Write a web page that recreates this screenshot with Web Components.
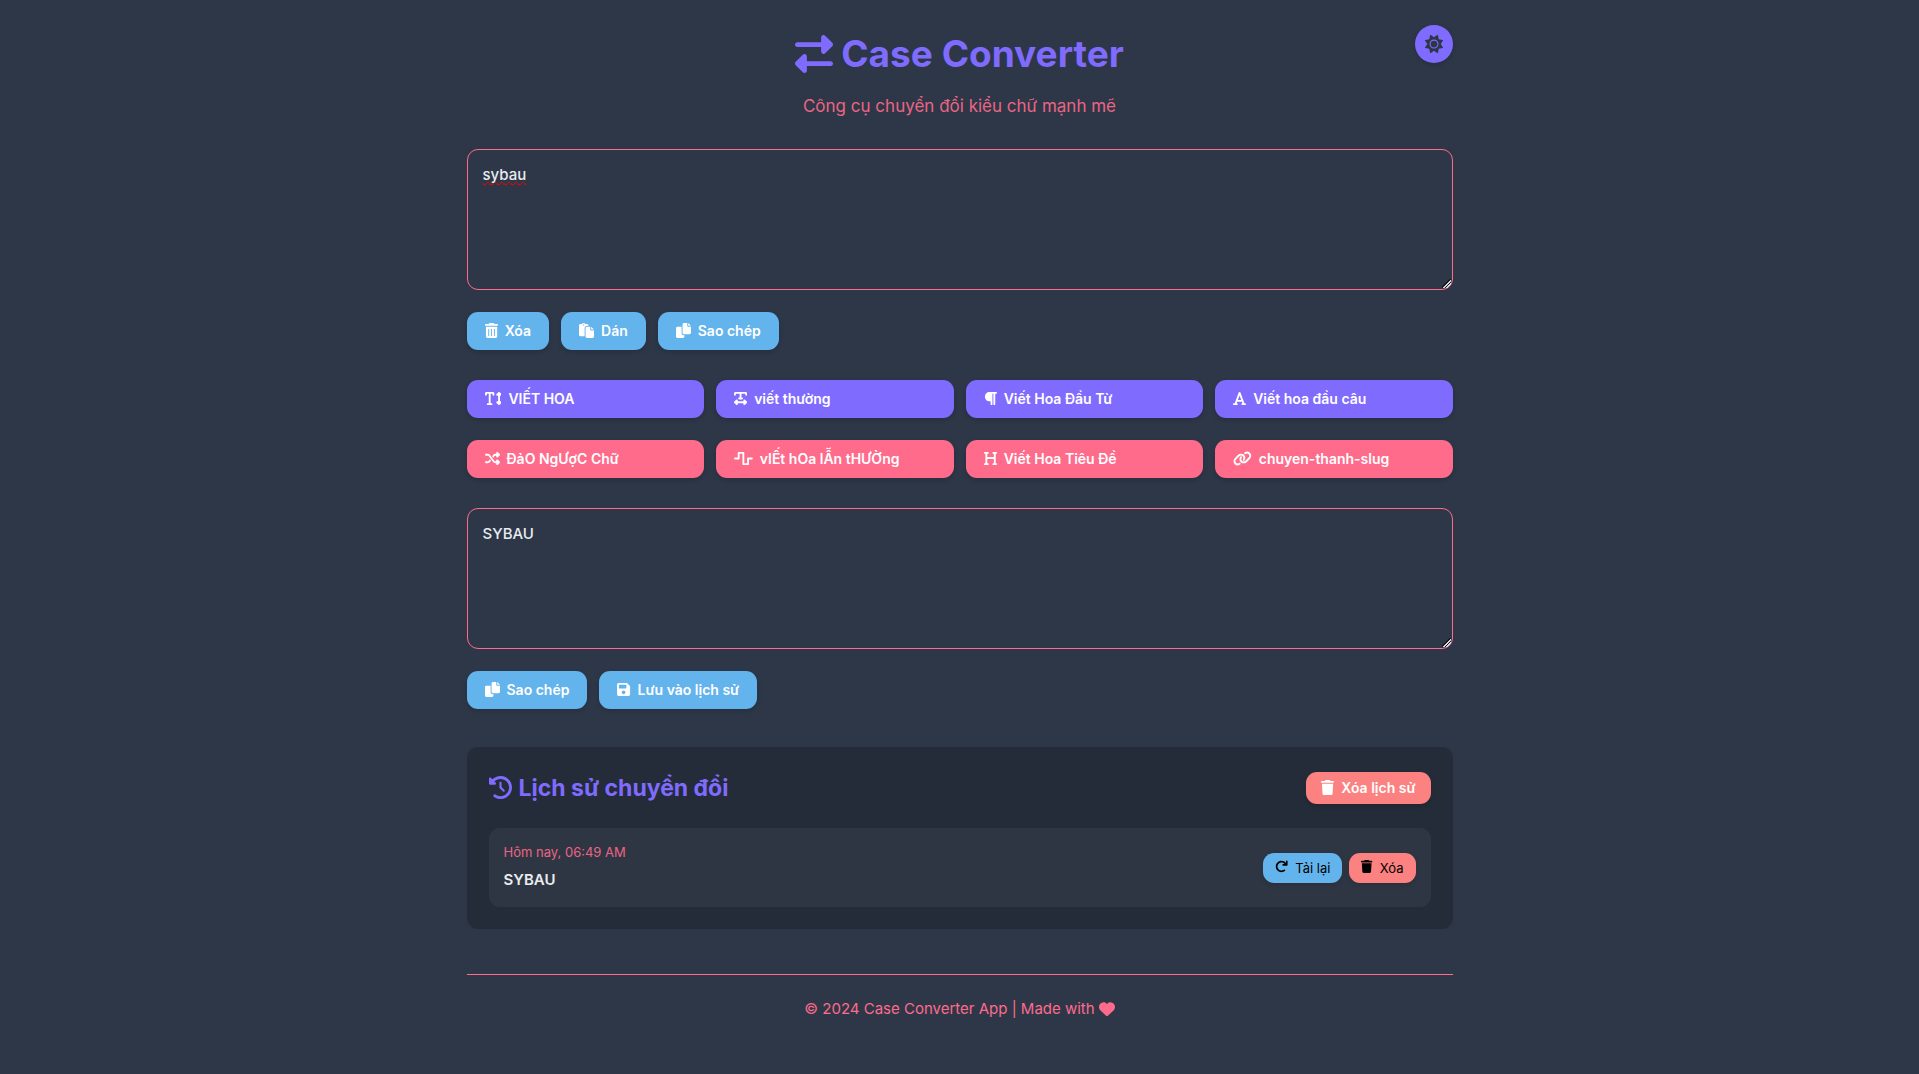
<!DOCTYPE html>
<html lang="vi">
<head>
<meta charset="utf-8">
<meta name="viewport" content="width=device-width, initial-scale=1">
<title>Case Converter</title>
<style>
  :root {
    --bg: #2d3748;
    --primary: #806bff;
    --secondary: #ff6b8b;
    --accent: #63b3ed;
    --danger: #fc8181;
    --text: #e9ecf1;
  }
  * { box-sizing: border-box; }
  body {
    margin: 0;
    min-height: 100vh;
    background: var(--bg);
    color: var(--text);
    font: 15px/24px Inter, "Noto Sans", sans-serif;
  }
</style>
</head>
<body>
<case-app></case-app>

<script>
const ICONS = {
  swap: [512, 'M32 96l320 0V32c0-12.9 7.8-24.6 19.8-29.6s25.7-2.2 34.9 6.9l96 96c6 6 9.4 14.1 9.4 22.6s-3.4 16.6-9.4 22.6l-96 96c-9.2 9.2-22.9 11.9-34.9 6.9s-19.8-16.6-19.8-29.6V160L32 160c-17.7 0-32-14.3-32-32s14.3-32 32-32zM480 352c17.7 0 32 14.3 32 32s-14.3 32-32 32H160v64c0 12.9-7.8 24.6-19.8 29.6s-25.7 2.2-34.9-6.9l-96-96c-6-6-9.4-14.1-9.4-22.6s3.4-16.6 9.4-22.6l96-96c9.2-9.2 22.9-11.9 34.9-6.9s19.8 16.6 19.8 29.6l0 64H480z'],
  sun: [512, 'M361.5 1.2c5 2.1 8.6 6.6 9.6 11.9L391 121l107.9 19.8c5.3 1 9.8 4.6 11.9 9.6s1.5 10.7-1.6 15.2L446.9 256l62.3 90.3c3.1 4.5 3.7 10.2 1.6 15.2s-6.6 8.6-11.9 9.6L391 391 371.1 498.9c-1 5.3-4.6 9.8-9.6 11.9s-10.7 1.5-15.2-1.6L256 446.9l-90.3 62.3c-4.5 3.1-10.2 3.7-15.2 1.6s-8.6-6.6-9.6-11.9L121 391 13.1 371.1c-5.3-1-9.8-4.6-11.9-9.6s-1.5-10.7 1.6-15.2L65.1 256 2.8 165.7c-3.1-4.5-3.7-10.2-1.6-15.2s6.6-8.6 11.9-9.6L121 121 140.9 13.1c1-5.3 4.6-9.8 9.6-11.9s10.7-1.5 15.2 1.6L256 65.1 346.3 2.8c4.5-3.1 10.2-3.7 15.2-1.6zM160 256a96 96 0 1 1 192 0 96 96 0 1 1 -192 0zm224 0a128 128 0 1 0 -256 0 128 128 0 1 0 256 0z'],
  bin: [448, 'M135.2 17.7C140.6 6.8 151.7 0 163.8 0H284.2c12.1 0 23.2 6.8 28.6 17.7L320 32h96c17.7 0 32 14.3 32 32s-14.3 32-32 32H32C14.3 96 0 81.7 0 64S14.3 32 32 32h96l7.2-14.3zM32 128H416V448c0 35.3-28.7 64-64 64H96c-35.3 0-64-28.7-64-64V128zm96 64c-8.8 0-16 7.2-16 16V432c0 8.8 7.2 16 16 16s16-7.2 16-16V208c0-8.8-7.2-16-16-16zm96 0c-8.8 0-16 7.2-16 16V432c0 8.8 7.2 16 16 16s16-7.2 16-16V208c0-8.8-7.2-16-16-16zm96 0c-8.8 0-16 7.2-16 16V432c0 8.8 7.2 16 16 16s16-7.2 16-16V208c0-8.8-7.2-16-16-16z'],
  trash: [448, 'M135.2 17.7L128 32H32C14.3 32 0 46.3 0 64S14.3 96 32 96H416c17.7 0 32-14.3 32-32s-14.3-32-32-32H320l-7.2-14.3C307.4 6.8 296.3 0 284.2 0H163.8c-12.1 0-23.2 6.8-28.6 17.7zM416 128H32L53.2 467c1.6 25.3 22.6 45 47.9 45H346.9c25.3 0 46.3-19.7 47.9-45L416 128z'],
  paste: [512, 'M320 96V80C320 53.49 298.5 32 272 32H215.4C204.3 12.89 183.6 0 160 0S115.7 12.89 104.6 32H48C21.49 32 0 53.49 0 80v320C0 426.5 21.49 448 48 448l144 .0013L192 176C192 131.8 227.8 96 272 96H320zM160 88C146.8 88 136 77.25 136 64S146.8 40 160 40S184 50.75 184 64S173.3 88 160 88zM416 128v96h96L416 128zM384 224L384 128h-112C245.5 128 224 149.5 224 176v288c0 26.51 21.49 48 48 48h192c26.51 0 48-21.49 48-48V256h-95.99C398.4 256 384 241.6 384 224z'],
  copy: [512, 'M384 96L384 0h-112c-26.51 0-48 21.49-48 48v288c0 26.51 21.49 48 48 48H464c26.51 0 48-21.49 48-48V128h-95.1C398.4 128 384 113.6 384 96zM416 0v96h96L416 0zM192 352V128h-144c-26.51 0-48 21.49-48 48v288c0 26.51 21.49 48 48 48h192c26.51 0 48-21.49 48-48L288 416h-32C220.7 416 192 387.3 192 352z'],
  textHeight: [576, 'M64 128V96h64l0 320H96c-17.7 0-32 14.3-32 32s14.3 32 32 32H224c17.7 0 32-14.3 32-32s-14.3-32-32-32H192l0-320h64v32c0 17.7 14.3 32 32 32s32-14.3 32-32V80c0-26.5-21.5-48-48-48H160 48C21.5 32 0 53.5 0 80v48c0 17.7 14.3 32 32 32s32-14.3 32-32zM502.6 41.4c-12.5-12.5-32.8-12.5-45.3 0l-64 64c-9.2 9.2-11.9 22.9-6.9 34.9s16.6 19.8 29.6 19.8h32V352H416c-12.9 0-24.6 7.8-29.6 19.8s-2.2 25.7 6.9 34.9l64 64c12.5 12.5 32.8 12.5 45.3 0l64-64c9.2-9.2 11.9-22.9 6.9-34.9s-16.6-19.8-29.6-19.8H512V160h32c12.9 0 24.6-7.8 29.6-19.8s2.2-25.7-6.9-34.9l-64-64z'],
  textWidth: [448, 'M64 128V96H192l0 128H176c-17.7 0-32 14.3-32 32s14.3 32 32 32h96c17.7 0 32-14.3 32-32s-14.3-32-32-32H256l0-128H384v32c0 17.7 14.3 32 32 32s32-14.3 32-32V80c0-26.5-21.5-48-48-48H224 48C21.5 32 0 53.5 0 80v48c0 17.7 14.3 32 32 32s32-14.3 32-32zM9.4 361.4c-12.5 12.5-12.5 32.8 0 45.3l64 64c9.2 9.2 22.9 11.9 34.9 6.9s19.8-16.6 19.8-29.6V416H320v32c0 12.9 7.8 24.6 19.8 29.6s25.7 2.2 34.9-6.9l64-64c12.5-12.5 12.5-32.8 0-45.3l-64-64c-9.2-9.2-22.9-11.9-34.9-6.9s-19.8 16.6-19.8 29.6v32H128V320c0-12.9-7.8-24.6-19.8-29.6s-25.7-2.2-34.9 6.9l-64 64z'],
  paragraph: [448, 'M192 32h64H416c17.7 0 32 14.3 32 32s-14.3 32-32 32H384l0 352c0 17.7-14.3 32-32 32s-32-14.3-32-32l0-352H288V448c0 17.7-14.3 32-32 32s-32-14.3-32-32V352H192c-88.4 0-160-71.6-160-160s71.6-160 160-160z'],
  font: [448, 'M254 52.8C249.3 40.3 237.3 32 224 32s-25.3 8.3-30 20.8L57.8 416H32c-17.7 0-32 14.3-32 32s14.3 32 32 32h96c17.7 0 32-14.3 32-32s-14.3-32-32-32h-1.8l18-48H303.8l18 48H320c-17.7 0-32 14.3-32 32s14.3 32 32 32h96c17.7 0 32-14.3 32-32s-14.3-32-32-32H390.2L254 52.8zM279.8 304H168.2L224 155.1 279.8 304z'],
  shuffle: [512, 'M403.8 34.4c12-5 25.7-2.2 34.9 6.9l64 64c6 6 9.4 14.1 9.4 22.6s-3.4 16.6-9.4 22.6l-64 64c-9.2 9.2-22.9 11.9-34.9 6.9s-19.8-16.6-19.8-29.6V160H352c-10.1 0-19.6 4.7-25.6 12.8L284 229.3 244 176l31.2-41.6C293.3 110.2 321.8 96 352 96h32V64c0-12.9 7.8-24.6 19.8-29.6zM164 282.7L204 336l-31.2 41.6C154.7 401.8 126.2 416 96 416H32c-17.7 0-32-14.3-32-32s14.3-32 32-32H96c10.1 0 19.6-4.7 25.6-12.8L164 282.7zm274.6 188c-9.2 9.2-22.9 11.9-34.9 6.9s-19.8-16.6-19.8-29.6V416H352c-30.2 0-58.7-14.2-76.8-38.4L121.6 172.8c-6-8.1-15.5-12.8-25.6-12.8H32c-17.7 0-32-14.3-32-32s14.3-32 32-32H96c30.2 0 58.7 14.2 76.8 38.4L326.4 339.2c6 8.1 15.5 12.8 25.6 12.8h32V320c0-12.9 7.8-24.6 19.8-29.6s25.7-2.2 34.9 6.9l64 64c6 6 9.4 14.1 9.4 22.6s-3.4 16.6-9.4 22.6l-64 64z'],
  wave: [640, 'M128 64c0-17.7 14.3-32 32-32H320c17.7 0 32 14.3 32 32V416h96V256c0-17.7 14.3-32 32-32H608c17.7 0 32 14.3 32 32s-14.3 32-32 32H512V448c0 17.7-14.3 32-32 32H320c-17.7 0-32-14.3-32-32V96H192V256c0 17.7-14.3 32-32 32H32c-17.7 0-32-14.3-32-32s14.3-32 32-32h96V64z'],
  heading: [448, 'M0 64C0 46.3 14.3 32 32 32H80h48c17.7 0 32 14.3 32 32s-14.3 32-32 32H112V208H336V96H320c-17.7 0-32-14.3-32-32s14.3-32 32-32h48 48c17.7 0 32 14.3 32 32s-14.3 32-32 32H400V240 416h16c17.7 0 32 14.3 32 32s-14.3 32-32 32H368 320c-17.7 0-32-14.3-32-32s14.3-32 32-32h16V272H112V416h16c17.7 0 32 14.3 32 32s-14.3 32-32 32H80 32c-17.7 0-32-14.3-32-32s14.3-32 32-32H48V240 96H32C14.3 96 0 81.7 0 64z'],
  link: [640, 'M579.8 267.7c56.5-56.5 56.5-148 0-204.5c-50-50-128.8-56.5-186.3-15.4l-1.6 1.1c-14.4 10.3-17.7 30.3-7.4 44.6s30.3 17.7 44.6 7.4l1.6-1.1c32.1-22.9 76-19.3 103.8 8.6c31.5 31.5 31.5 82.5 0 114L422.3 334.8c-31.5 31.5-82.5 31.5-114 0c-27.9-27.9-31.5-71.8-8.6-103.8l1.1-1.6c10.3-14.4 6.9-34.4-7.4-44.6s-34.4-6.9-44.6 7.4l-1.1 1.6C206.5 251.2 213 330 263 380c56.5 56.5 148 56.5 204.5 0L579.8 267.7zM60.2 244.3c-56.5 56.5-56.5 148 0 204.5c50 50 128.8 56.5 186.3 15.4l1.6-1.1c14.4-10.3 17.7-30.3 7.4-44.6s-30.3-17.7-44.6-7.4l-1.6 1.1c-32.1 22.9-76 19.3-103.8-8.6C74 372 74 321 105.5 289.5L217.7 177.2c31.5-31.5 82.5-31.5 114 0c27.9 27.9 31.5 71.8 8.6 103.9l-1.1 1.6c-10.3 14.4-6.9 34.4 7.4 44.6s34.4 6.9 44.6-7.4l1.1-1.6C433.5 260.8 427 182 377 132c-56.5-56.5-148-56.5-204.5 0L60.2 244.3z'],
  save: [448, 'M433.1 129.1l-83.9-83.9C342.3 38.32 327.1 32 316.1 32H64C28.65 32 0 60.65 0 96v320c0 35.35 28.65 64 64 64h320c35.35 0 64-28.65 64-64V163.9C448 152.9 441.7 137.7 433.1 129.1zM224 416c-35.34 0-64-28.66-64-64s28.66-64 64-64s64 28.66 64 64S259.3 416 224 416zM320 208C320 216.8 312.8 224 304 224h-224C71.16 224 64 216.8 64 208v-96C64 103.2 71.16 96 80 96h224C312.8 96 320 103.2 320 112V208z'],
  history: [512, 'M75 75L41 41C25.9 25.9 0 36.6 0 57.9V168c0 13.3 10.7 24 24 24H134.1c21.4 0 32.1-25.9 17-41l-30.8-30.8C155 85.5 203 64 256 64c106 0 192 86 192 192s-86 192-192 192c-40.8 0-78.6-12.7-109.7-34.4c-14.5-10.1-34.4-6.6-44.6 7.9s-6.6 34.4 7.9 44.6C151.2 495 201.7 512 256 512c141.4 0 256-114.6 256-256S397.4 0 256 0C185.3 0 121.3 28.7 75 75zm181 53c-13.3 0-24 10.7-24 24V256c0 6.4 2.5 12.5 7 17l72 72c9.4 9.4 24.6 9.4 33.9 0s9.4-24.6 0-33.9l-65-65V152c0-13.3-10.7-24-24-24z'],
  redo: [512, 'M496 48V192c0 17.69-14.31 32-32 32H320c-17.69 0-32-14.31-32-32s14.31-32 32-32h63.39c-29.97-39.7-77.25-63.78-127.6-63.78C167.7 96.22 96 167.9 96 256s71.69 159.8 159.8 159.8c34.88 0 68.03-11.03 95.88-31.94c14.22-10.53 34.22-7.75 44.81 6.375c10.59 14.16 7.75 34.22-6.375 44.81c-39.03 29.28-85.36 44.86-134.2 44.86C132.5 479.9 32 379.4 32 256s100.5-223.9 223.9-223.9c69.15 0 134 32.47 176.1 86.12V48c0-17.69 14.31-32 32-32S496 30.31 496 48z'],
  heart: [512, 'M47.6 300.4L228.3 469.1c7.5 7 17.4 10.9 27.7 10.9s20.2-3.9 27.7-10.9L464.4 300.4c30.4-28.3 47.6-68 47.6-109.5v-5.8c0-69.9-50.5-129.5-119.4-141C347 36.5 300.6 51.4 268 84L256 96 244 84c-32.6-32.6-79-47.5-124.6-39.9C50.5 55.6 0 115.2 0 185.1v5.8c0 41.5 17.2 81.2 47.6 109.5z']
};

class Base extends HTMLElement {
  constructor() {
    super();
    this.attachShadow({ mode: 'open' });
  }
  connectedCallback() {
    this.shadowRoot.innerHTML = '<style>*{box-sizing:border-box}</style>' + this.render();
  }
}

/* <case-icon name="..."> scales with --icon-size */
customElements.define('case-icon', class extends Base {
  render() {
    const [w, d] = ICONS[this.getAttribute('name')];
    return `<style>
      :host { display: inline-flex; flex: none; }
      svg { display: block; height: var(--icon-size, 15px); width: auto; }
    </style>
    <svg viewBox="0 0 ${w} 512" fill="currentColor" fill-rule="evenodd" aria-hidden="true"><path d="${d}"/></svg>`;
  }
});

/* <case-button icon kind size> with the label in the slot */
customElements.define('case-button', class extends Base {
  render() {
    return `<style>
      :host { display: block; --fill: var(--accent); }
      :host([kind="primary"]) { --fill: var(--primary); }
      :host([kind="secondary"]) { --fill: var(--secondary); }
      :host([kind="danger"]) { --fill: var(--danger); }
      button {
        display: flex; align-items: center; gap: 7px;
        width: 100%; height: 38px; padding: 0 18px;
        border: 0; border-radius: 11px;
        background: var(--fill); color: #fff;
        font: 600 14px/20px Inter, "Noto Sans", sans-serif;
        white-space: nowrap; cursor: pointer;
        box-shadow: 0 2px 5px rgba(0, 0, 0, .15);
      }
      case-icon { padding-bottom: 2px; }
      :host([size="medium"]) button { height: 32px; padding: 0 15px; }
      :host([size="small"]) { --icon-size: 13px; }
      :host([size="small"]) button {
        height: 30px; padding: 0 12px; color: #000; font-weight: 400; font-size: 13px;
      }
    </style>
    <button type="button"><case-icon name="${this.getAttribute('icon')}"></case-icon><span><slot></slot></span></button>`;
  }
});

customElements.define('case-textarea', class extends Base {
  render() {
    return `<style>
      :host { display: block; }
      textarea {
        display: block; width: 100%; height: 141px; margin: 0; padding: 13px 15px;
        border: 1px solid var(--secondary); border-radius: 11px;
        background: transparent; color: var(--text); outline: 0; resize: vertical;
        font: 500 15px/24px Inter, "Noto Sans", sans-serif;
      }
      textarea::-webkit-resizer {
        background: linear-gradient(135deg, transparent 44%, #14181f 44% 52%, #d5d7da 52% 64%, #14181f 64% 72%, #d5d7da 72% 82%, transparent 82%)
          right 1px bottom 1px / 9px 9px no-repeat;
      }
      :host([misspelt]) textarea { text-decoration: underline wavy #f00 1px; text-underline-offset: 1px; text-decoration-skip-ink: none; }
    </style>
    <textarea spellcheck="false" aria-label="${this.getAttribute('label')}">${this.getAttribute('value')}</textarea>`;
  }
});

customElements.define('case-header', class extends Base {
  render() {
    return `<style>
      :host { display: grid; grid-template-columns: 38px 1fr 38px; align-items: start; }
      .titles { grid-column: 2; text-align: center; padding-top: 5px; }
      h1 {
        display: flex; justify-content: center; align-items: center; gap: 8px;
        margin: 0 0 15px; color: var(--primary);
        font-size: 37px; line-height: 48px; font-weight: 700; --icon-size: 38px;
      }
      p { margin: 0; color: var(--secondary); font-size: 17px; line-height: 26px; opacity: .9; }
      button {
        display: grid; place-items: center; width: 38px; height: 38px; padding: 0;
        border: 0; border-radius: 50%; background: var(--primary); color: var(--bg);
        box-shadow: 0 2px 5px rgba(0, 0, 0, .15); cursor: pointer; --icon-size: 18px;
      }
    </style>
    <div class="titles">
      <h1><case-icon name="swap"></case-icon><span>Case Converter</span></h1>
      <p>Công cụ chuyển đổi kiểu chữ mạnh mẽ</p>
    </div>
    <button type="button" aria-label="Theme"><case-icon name="sun"></case-icon></button>`;
  }
});

/* One saved conversion: time attribute, text in the slot */
customElements.define('case-history-item', class extends Base {
  render() {
    return `<style>
      :host {
        display: flex; justify-content: space-between; align-items: center;
        padding: 12px 15px 15px; border-radius: 11px; background: rgba(255, 255, 255, .05);
      }
      time { display: block; color: var(--secondary); font-size: 13px; line-height: 24px; opacity: .9; }
      .text { font-weight: 600; line-height: 24px; padding-top: 4px; }
      .actions { display: flex; gap: 7px; padding-top: 3px; }
    </style>
    <div><time>${this.getAttribute('time')}</time><div class="text"><slot></slot></div></div>
    <div class="actions">
      <case-button size="small" icon="redo">Tải lại</case-button>
      <case-button size="small" kind="danger" icon="trash">Xóa</case-button>
    </div>`;
  }
});

customElements.define('case-history', class extends Base {
  render() {
    return `<style>
      :host { display: block; padding: 22px; border-radius: 11px; background: rgba(0, 0, 0, .2); }
      header { display: flex; justify-content: space-between; align-items: center; margin-bottom: 21px; }
      h2 {
        display: flex; align-items: center; gap: 7px; margin: 0; color: var(--primary);
        font-size: 23px; line-height: 38px; font-weight: 700; --icon-size: 23px;
      }
      case-icon { padding-bottom: 2px; }
    </style>
    <header>
      <h2><case-icon name="history"></case-icon><span>Lịch sử chuyển đổi</span></h2>
      <case-button size="medium" kind="danger" icon="trash">Xóa lịch sử</case-button>
    </header>
    <slot></slot>`;
  }
});

customElements.define('case-app', class extends Base {
  render() {
    return `<style>
      :host { display: block; max-width: 1030px; margin: 0 auto; padding: 25px 22px 48px; }
      case-header { margin-bottom: 30px; }
      .row { display: flex; flex-wrap: wrap; gap: 12px; margin: 22px 0 30px; }
      .grid { display: grid; grid-template-columns: repeat(4, 1fr); gap: 22px 12px; margin-bottom: 30px; }
      case-history { margin-top: 38px; }
      footer {
        display: flex; justify-content: center; align-items: center; gap: 4px;
        margin-top: 45px; padding-top: 22px; border-top: 1px solid var(--secondary);
        color: var(--secondary); font-size: 15px; line-height: 24px; --icon-size: 16px;
      }
    </style>
    <case-header></case-header>
    <main>
      <case-textarea misspelt label="Văn bản gốc" value="sybau"></case-textarea>
      <div class="row">
        <case-button icon="bin">Xóa</case-button>
        <case-button icon="paste">Dán</case-button>
        <case-button icon="copy">Sao chép</case-button>
      </div>
      <div class="grid">
        <case-button kind="primary" icon="textHeight">VIẾT HOA</case-button>
        <case-button kind="primary" icon="textWidth">viết thường</case-button>
        <case-button kind="primary" icon="paragraph">Viết Hoa Đầu Từ</case-button>
        <case-button kind="primary" icon="font">Viết hoa đầu câu</case-button>
        <case-button kind="secondary" icon="shuffle">ĐảO NgƯợC Chữ</case-button>
        <case-button kind="secondary" icon="wave">vIẾt hOa lẪn tHƯỜng</case-button>
        <case-button kind="secondary" icon="heading">Viết Hoa Tiêu Đề</case-button>
        <case-button kind="secondary" icon="link">chuyen-thanh-slug</case-button>
      </div>
      <case-textarea label="Kết quả" value="SYBAU"></case-textarea>
      <div class="row">
        <case-button icon="copy">Sao chép</case-button>
        <case-button icon="save">Lưu vào lịch sử</case-button>
      </div>
      <case-history>
        <case-history-item time="Hôm nay, 06:49 AM">SYBAU</case-history-item>
      </case-history>
    </main>
    <footer><span>© 2024 Case Converter App | Made with</span><case-icon name="heart"></case-icon></footer>`;
  }
});
</script>
</body>
</html>
